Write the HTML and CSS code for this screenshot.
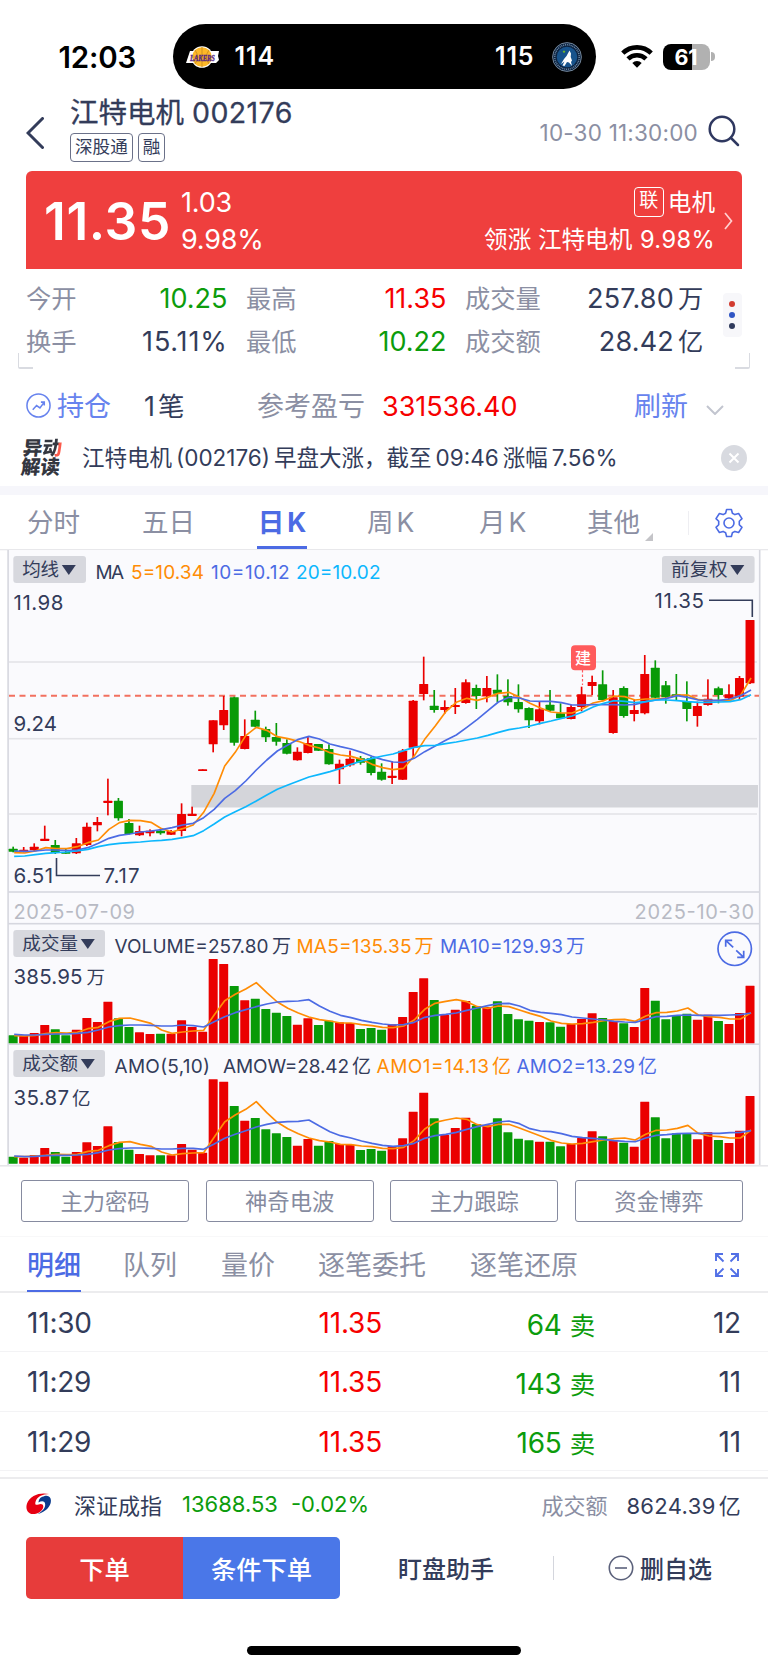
FILE: index.html
```html
<!DOCTYPE html>
<html lang="zh-CN">
<head>
<meta charset="utf-8">
<title>江特电机 002176</title>
<link rel="stylesheet" href="styles.css">
</head>
<body>
<div class="screen">
  <div class="status">
    <span class="clock">12:03</span>
    <div class="island">
      <svg class="lakers" viewBox="0 0 34 22"><circle cx="16" cy="11" r="10.8" fill="#fff"/><path d="M6 5h27l-1 5 1 4-3 3H0L4 5z" fill="#fff"/><circle cx="16" cy="11" r="9.800" fill="#fdb827"/><path d="M16 1v20M6 11h20M9 4q5 7 0 14M23 4q-5 7 0 14" fill="none" stroke="#b97e1c" stroke-width=".7"/><text x="4" y="14.800" textLength="25" lengthAdjust="spacingAndGlyphs" class="lakers-word">LAKERS</text></svg>
      <b>114</b><i class="grow"></i><b>115</b>
      <svg class="wolves" viewBox="0 0 30 30"><circle cx="15" cy="15" r="14.4" fill="#0c2340" stroke="#8fa2b5" stroke-width=".8"/><circle cx="15" cy="15" r="12.2" fill="none" stroke="#6f89a5" stroke-width="1.500" stroke-dasharray="1 .9"/><circle cx="15" cy="15" r="10.3" fill="#17538c"/><path d="M17.500 8.500l1.500 3-.3 3.500 1.300 3.500-1 1.500 1 4-3-3.500-2-.5-2.500 4-2-.5 2-4-3.500 2.500 3-5 2.500-3z" fill="#fff"/><path d="M12 8l.5 1 1 .2-.8.7.2 1-.9-.5-.9.5.2-1-.8-.7 1-.2z" fill="#78be20"/></svg>
    </div>
    <svg class="wifi" viewBox="0 0 32 24"><g fill="none" stroke="#000" stroke-width="4.600"><path d="M1.800 9.200a20.300 20.300 0 0 1 28.400 0"/><path d="M7 14.800a13 13 0 0 1 18 0"/></g><path d="M11.300 18.900a6.800 6.800 0 0 1 9.400 0L16 23.800z"/></svg>
    <div class="battery"><span>61</span></div><i class="nub"></i>
  </div>

  <header class="head">
    <svg class="back" viewBox="0 0 18 32"><path d="M16.500 1.500L2 16l14.500 14.500"/></svg>
    <div class="stock">
      <h1>江特电机<span>002176</span></h1>
      <div class="tags"><span>深股通</span><span>融</span></div>
    </div>
    <time>10-30 11:30:00</time>
    <svg class="search" viewBox="0 0 32 32"><circle cx="14" cy="14" r="12.300"/><path d="M23 23l7 7"/></svg>
  </header>

  <section class="quote">
    <strong>11.35</strong>
    <div class="delta"><span>1.03</span><span>9.98%</span></div>
    <div class="sector"><p><em>联</em>电机</p><p>领涨 江特电机 <span>9.98%</span></p></div>
    <svg class="more" viewBox="0 0 9 18"><path d="M1 1l6.500 8L1 17"/></svg>
  </section>

  <section class="stats">
    <div class="stat-grid">
      <label>今开</label><b class="down">10.25</b><label>最高</label><b class="up">11.35</b><label>成交量</label><b class="sum">257.80<u>万</u></b>
      <label>换手</label><b class="pct">15.11%</b><label>最低</label><b class="down">10.22</b><label>成交额</label><b class="sum">28.42<u>亿</u></b>
    </div>
    <div class="dots"><i></i><i></i><i></i></div>
    <i class="corner left"></i><i class="corner right"></i>
  </section>

  <section class="holding">
    <svg class="trend" viewBox="0 0 26 26"><circle cx="13" cy="13" r="12"/><path d="M7 17.500l4-4.500 3.500 2.500L19 9.500M15.500 9.500H19V13"/></svg>
    <span class="blue hold">持仓</span><span class="count">1<u>笔</u></span>
    <span class="muted ref">参考盈亏</span><span class="up profit">331536.40</span>
    <span class="blue refresh">刷新</span>
    <svg class="chev" viewBox="0 0 18 10"><path d="M1 1l8 8 8-8"/></svg>
  </section>

  <section class="notice">
    <div class="badge"><span>异<em>动</em></span><span>解读</span></div>
    <p>江特电机<u>(002176)</u><u>早盘大涨，</u>截至<u>09:46</u><u>涨幅</u><u>7.56%</u></p>
    <svg class="close" viewBox="0 0 26 26"><circle cx="13" cy="13" r="13"/><path d="M8.500 8.500l9 9M17.500 8.500l-9 9"/></svg>
  </section>

  <nav class="periods">
    <a>分时</a><a>五日</a><a class="on">日<u>K</u></a><a>周<u>K</u></a><a>月<u>K</u></a><a class="other">其他</a>
    <i class="rule"></i>
    <svg class="gear" viewBox="0 0 30 30"><circle cx="15" cy="15" r="5"/><path d="M12.600 1.500h4.800l1 3.700 2.500 1.400 3.700-1.100 3.400 5.100-2.700 2.700v3.400l2.700 2.700-3.400 5.100-3.700-1.100-2.500 1.400-1 3.700h-4.800l-1-3.700-2.500-1.400-3.700 1.100L2 19.400l2.700-2.700v-3.400L2 10.600l3.400-5.100 3.700 1.100 2.500-1.400z"/></svg>
  </nav>

  <svg class="chart" id="chart" viewBox="0 549 768 618"></svg>

  <div class="tools"><button>主力密码</button><button>神奇电波</button><button>主力跟踪</button><button>资金博弈</button></div>

  <nav class="ticks-nav">
    <a class="on">明细</a><a>队列</a><a>量价</a><a>逐笔委托</a><a>逐笔还原</a>
    <svg class="expand" viewBox="0 0 24 24"><path d="M1 8V1h7M1 1l7.500 7.500M16 1h7v7M23 1l-7.500 7.500M1 16v7h7M1 23l7.500-7.500M16 23h7v-7M23 23l-7.500-7.500"/></svg>
  </nav>
  <div class="ticks">
    <div class="tick"><span>11:30</span><span class="up">11.35</span><span class="down">64<u>卖</u></span><span>12</span></div>
    <div class="tick"><span>11:29</span><span class="up">11.35</span><span class="down">143<u>卖</u></span><span>11</span></div>
    <div class="tick"><span>11:29</span><span class="up">11.35</span><span class="down">165<u>卖</u></span><span>11</span></div>
  </div>

  <div class="index">
    <svg class="szse" viewBox="0 0 26 23"><path d="M24 1C15-1 4 2 1 11c-2 6 1 11 6 11 6 0 11-4 11-8 0-3-3-3-5-2-3 1-4 0-3-3C11 4 17 1 24 1z" fill="#e60012"/><path d="M17 4c6-3 9 0 9 4 0 6-6 12-14 14 5-3 8-6 8-10 0-4-4-4-7-2 0-2 1-5 4-6z" fill="#0a3a8c"/></svg>
    <span class="name">深证成指</span><span class="down val">13688.53</span><span class="down chg">-0.02%</span>
    <span class="muted turnover">成交额</span><span class="amt">8624.39<u>亿</u></span>
  </div>

  <div class="actions">
    <button class="order">下单</button><button class="cond">条件下单</button>
    <span class="assist">盯盘助手</span><i></i>
    <span class="remove"><svg viewBox="0 0 26 26"><circle cx="13" cy="13" r="11.700"/><path d="M7 13h12"/></svg>删自选</span>
  </div>
  <div class="home"></div>
</div>
<script src="chart.js"></script>
</body>
</html>
```
FILE: styles.css
```css
* { box-sizing: border-box; margin: 0; padding: 0; }
body { background: #fff; color: #333c5a; font-family: Inter, "Noto Sans CJK SC", sans-serif; }
.screen { width: 768px; height: 1669px; overflow: hidden; background: #fff; display: flex; flex-direction: column; }
.screen > * { flex: none; }
svg { display: block; fill: none; flex: none; }
u, i, em { text-decoration: none; font-style: normal; }
button { font-family: inherit; background: none; border: 0; }
.up { color: #f60000; }
.down { color: #0c9c0c; }
.blue { color: #6783ee; }
.muted { color: #8b8fa3; }

.status { height: 97px; padding-top: 24px; display: flex; align-items: flex-start; }
.clock { width: 114px; margin-left: 58.500px; font-size: 29.500px; font-weight: 600; line-height: 66px; color: #000; letter-spacing: -.2px; }
.island { width: 423px; height: 65px; border-radius: 33px; background: #000; color: #fff; display: flex; align-items: center; padding: 0 14px 0 13px; }
.island b { font-size: 25px; font-weight: 600; line-height: 65px; letter-spacing: .9px; }
.island .grow { flex: 1; }
.lakers { width: 34px; height: 22px; margin-right: 15px; }
.lakers-word { font: italic bold 9px "Liberation Serif", serif; fill: #552583; stroke: #552583; stroke-width: .3px; }
.wolves { width: 30px; height: 30px; margin-left: 17px; }
.wifi { width: 32px; height: 24px; margin: 20px 10px 0 25px; fill: #000; }
.battery { width: 47px; height: 26px; margin-top: 19.500px; border-radius: 8px; background: linear-gradient(90deg, #000 61%, #b1b1b1 61%); color: #fff; text-align: center; font-weight: 700; font-size: 21.500px; line-height: 26px; }
.nub { width: 4px; height: 9px; margin: 28px 0 0 1px; border-radius: 0 5px 5px 0; background: #b1b1b1; }

.head { height: 74px; padding: 0 28px 0 26px; display: flex; align-items: flex-start; }
.back { width: 18px; height: 32px; margin-top: 20px; stroke: #333c5a; stroke-width: 3; stroke-linecap: round; }
.stock { margin-left: 26px; flex: 1; }
.stock h1 { font-size: 28.500px; line-height: 32px; font-weight: 400; -webkit-text-stroke: .3px; white-space: nowrap; }
.stock h1 span { margin-left: 8px; font-size: 28.500px; letter-spacing: .4px; }
.tags { display: flex; gap: 5px; margin-top: 4px; }
.tags span { height: 29px; padding: 0 4px; border: 1.500px solid #6b7189; border-radius: 4px; font-size: 17.600px; line-height: 26px; }
.head time { margin-top: 22px; color: #8b8fa3; font-size: 22.500px; line-height: 28px; white-space: nowrap; letter-spacing: .2px; }
.search { width: 32px; height: 32px; margin: 18px 0 0 10px; stroke: #2f3860; stroke-width: 2.500; stroke-linecap: round; }

.quote { width: 716px; height: 98px; margin-left: 26px; border-radius: 6px 6px 0 0; background: #ef3f3e; color: #fff; display: flex; align-items: center; padding: 1px 9px 0 18px; }
.quote strong { width: 137px; font-size: 51.500px; font-weight: 600; letter-spacing: .6px; }
.delta { flex: 1; font-size: 27px; line-height: 37px; display: flex; flex-direction: column; letter-spacing: -.2px; }
.sector { text-align: right; font-size: 23.600px; }
.sector p { height: 37px; line-height: 37px; white-space: nowrap; }
.sector p:first-child { display: flex; align-items: center; justify-content: flex-end; }
.sector em { width: 30px; height: 30px; border: 1.500px solid #fff; border-radius: 4px; margin-right: 4px; font-size: 19px; line-height: 26px; text-align: center; }
.sector span { letter-spacing: .4px; margin-left: 1px; }
.more { width: 9px; height: 18px; margin-left: 9px; stroke: #ffd0d0; stroke-width: 1.700; }

.stats { height: 103px; padding: 9px 26px 0; display: flex; position: relative; }
.stat-grid { display: grid; grid-template-columns: 72px 129.500px 72px 147px 98px 159px; grid-template-rows: 42.500px 42.500px; align-items: center; width: 677.500px; }
.stat-grid label { color: #8b8fa3; font-size: 25.300px; line-height: 42px; white-space: nowrap; }
.stat-grid b { font-weight: 400; font-size: 27px; line-height: 42px; white-space: nowrap; justify-self: end; }
.stat-grid .pct { letter-spacing: .8px; }
.stat-grid .sum { letter-spacing: .2px; }
.stat-grid > :nth-child(6n+3), .stat-grid > :nth-child(6n+5) { margin-left: 18.500px; }
.stat-grid u { font-size: 25.300px; margin-left: 4px; }
.dots { width: 20px; height: 44px; margin: 15px 0 0 19px; border-radius: 4px; background: #f7f7fa; display: flex; flex-direction: column; align-items: center; justify-content: center; gap: 4.700px; }
.dots i { width: 6px; height: 6px; border-radius: 50%; background: #d23c30; }
.dots i:nth-child(2) { background: #2f55c4; }
.dots i:nth-child(3) { background: #2f3a5c; }
.corner { position: absolute; bottom: 3px; width: 15px; height: 16px; border-bottom: 2px solid #d9dbe1; }
.corner.left { left: 18px; border-left: 1.500px solid #d9dbe1; border-bottom-left-radius: 2px; }
.corner.right { right: 18px; border-right: 1.500px solid #d9dbe1; border-bottom-right-radius: 2px; }

.holding { height: 66px; padding-left: 26px; display: flex; align-items: center; font-size: 27px; line-height: 63px; white-space: nowrap; }
.holding span { padding-top: 3px; height: 66px; }
.trend { width: 25px; height: 25px; stroke: #6783ee; stroke-width: 1.600; }
.hold { width: 87px; margin-left: 6px; }
.count { width: 113px; }
.count u { margin-left: 3px; font-size: 26.500px; }
.ref { width: 125px; }
.profit { width: 252px; }
.refresh { width: 72px; }
.chev { width: 18px; height: 10px; margin-top: 9px; stroke: #c2c5cf; stroke-width: 2; }

.notice { height: 48px; padding: 0 21px 9px 22px; display: flex; align-items: center; }
.badge { width: 60px; height: 37px; display: flex; flex-direction: column; color: #33363f; font-size: 19.500px; line-height: 18.500px; font-weight: 900; transform: skewX(-6deg); }
.badge em { background: linear-gradient(105deg, #33363f 68%, #fb5b4c 68%); -webkit-background-clip: text; color: transparent; }
.notice p { flex: 1; font-size: 22.500px; padding-bottom: 3px; white-space: nowrap; }
.notice u { margin-left: 4px; }
.close { width: 26px; height: 26px; fill: #d8dae0; stroke: #fff; stroke-width: 2; }
.close circle { stroke: none; }

.periods { height: 63px; border-top: 9px solid #f6f6fb; padding-left: 27px; display: flex; align-items: flex-start; font-size: 26.500px; line-height: 54px; color: #8b8fa3; }
.periods a { width: 115px; height: 54px; white-space: nowrap; }
.periods a.on { width: 50px; margin-right: 60px; color: #4c6be4; font-weight: 700; border-bottom: 3px solid #4c6be4; text-align: center; }
.periods a:nth-child(4) { width: 112px; }
.periods a:nth-child(5) { width: 108px; }
.periods u { margin-left: 3px; }
.periods .other { width: 66px; position: relative; }
.other::after { content: ""; position: absolute; right: 0; top: 38px; border: solid transparent; border-width: 0 0 8px 8px; border-bottom-color: #c4c4c8; }
.rule { width: 1px; height: 24px; margin: 16px 25px 0 35px; background: #eeeef2; }
.gear { width: 30px; height: 30px; margin-top: 13px; stroke: #4c6be4; stroke-width: 1.600; stroke-linejoin: round; }

.chart { width: 768px; height: 618px; }
.chart text { fill: #333c5a; font-size: 19px; }
.chart .big { font-size: 20.500px; }
.chart .date { font-size: 20px; fill: #b8bac4; }
.chart .btn { font-size: 18.500px; }
.chart .orange { fill: #ff8c05; }
.chart .indigo { fill: #4c6be4; }
.chart .sky { fill: #0db7fd; }
.chart .white { fill: #fff; font-size: 16px; font-weight: 500; }
.chart .line { fill: none; stroke-width: 5; stroke-linejoin: round; }

.tools { height: 69px; padding: 13px 25px 0 21px; display: flex; justify-content: space-between; }
.tools button { width: 168px; height: 42px; border: 1.500px solid #868ba0; border-radius: 3px; color: #868ba0; font-size: 22.300px; line-height: 39px; }

.ticks-nav { height: 57px; border-top: 1px solid #f8f8f9; border-bottom: 2px solid #ececee; padding: 0 27px; display: flex; font-size: 27px; line-height: 57px; color: #8b8fa3; }
.ticks-nav a { height: 55px; margin-right: 44px; white-space: nowrap; }
.ticks-nav a:nth-child(3n) { margin-right: 43px; }
.ticks-nav a.on { margin-right: 42px; color: #4c6be4; font-weight: 500; border-bottom: 2.500px solid #4c6be4; }
.expand { width: 24px; height: 24px; margin: 16px 2px 0 auto; stroke: #5270e6; stroke-width: 1.900; }
.tick { height: 59.300px; border-bottom: 1.500px solid #f3f3f5; padding: 2px 27px 0; display: grid; grid-template-columns: 230px 125px 213px 146px; align-items: center; font-size: 28px; }
.tick span:nth-child(n+2) { justify-self: end; }
.tick u { font-size: 25.500px; margin-left: 8px; }
.ticks { height: 186px; border-bottom: 2px solid #ececee; letter-spacing: -.2px; }

.index { height: 58px; padding: 0 27px 9px 26px; display: flex; align-items: center; font-size: 22px; white-space: nowrap; }
.szse { width: 25px; height: 22px; }
.index .name { width: 108px; margin-left: 23px; }
.index .val { width: 109px; }
.index .turnover { margin-left: auto; margin-right: 19px; }
.index .amt { letter-spacing: .35px; }
.index u { margin-left: 3px; }

.actions { height: 61.500px; padding-left: 26px; display: flex; align-items: center; font-size: 24px; font-weight: 500; white-space: nowrap; }
.actions button { width: 157px; height: 61.500px; color: #fff; font-size: 25.300px; font-weight: 500; }
.actions .order { background: #e73c3b; border-radius: 5px 0 0 5px; }
.actions .cond { background: #4a77e8; border-radius: 0 5px 5px 0; }
.assist { margin-left: 58px; width: 155px; }
.actions i { width: 1px; height: 24px; background: #d4d6dd; }
.remove { display: flex; align-items: center; gap: 6px; margin-left: 54px; }
.remove svg { width: 26px; height: 26px; stroke: #5b617b; stroke-width: 1.600; }
.home { width: 274px; height: 9px; margin: 47px auto 0; border-radius: 5px; background: #000; }
```
FILE: chart.js
```javascript
// Candles: colour, high, body top, body bottom, low (thirds of a pixel below y=540)
const K = `g920,926,935,937 r921,929,934,937 r910,920,931,935 r857,896,903,903 g900,915,939,942 g925,936,941,941 r894,910,940,942 r848,860,915,918 r831,846,856,874 r716,782,789,826
g774,782,835,842 g837,849,882,884 r857,873,886,888 r868,872,880,889 g868,872,880,884 r870,873,884,885 r790,822,873,889 r800,821,828,828 r688,688,693,693 r541,541,613,637
r468,510,556,570 g470,472,608,617 r538,588,627,628 g512,539,560,562 g560,567,592,606 g549,591,605,617 g598,609,641,643 r622,635,661,662 r590,609,639,640 g612,612,632,633
g613,627,673,674 r659,671,688,732 r632,656,676,680 g648,655,668,674 g650,655,699,706 g670,695,719,722 r665,707,714,732 r627,632,719,720 r480,482,623,655 r350,432,462,481
g450,497,510,518 r481,501,510,521 r444,495,501,522 r418,427,489,491 g434,444,468,507 r408,444,468,487 g403,449,461,487 g418,468,487,497 g433,486,508,518 g502,504,541,564
r486,508,544,553 g450,494,512,513 g490,520,535,537 r495,501,537,538 r440,463,501,514 r407,426,438,465 g391,433,480,484 r450,472,579,581 g439,444,528,533 r480,510,522,544
r345,402,520,523 g361,383,473,475 g423,436,472,491 g402,463,468,480 g424,485,507,544 r485,498,528,560 r418,476,495,497 g440,445,465,490 r433,463,475,477 r408,414,470,480 r240,240,430,432`
  .split(/\s+/).map(s => [s[0], ...s.slice(1).split(',').map(Number)]);
const MA = {
  '#ff8c05': [938,939,933,923,926,926,920,908,900,868,848,841,842,847,866,876,866,855,817,760,678,637,587,562,571,590,596,604,616,624,638,645,649,658,673,683,689,685,648,598,558,515,487,475,481,472,460,457,472,490,504,516,519,519,506,489,482,468,470,480,477,477,474,465,465,479,482,482,482,466,414],
  '#4c6be4': [933,934,933,930,930,932,930,923,910,895,886,882,876,873,869,863,855,850,833,808,775,752,723,690,660,633,615,598,589,597,612,620,627,637,649,659,666,667,655,635,618,601,585,562,538,512,486,472,474,483,484,484,488,495,495,494,494,494,495,493,485,480,475,467,472,480,481,481,477,467,450],
  '#0db7fd': [949,948,944,940,938,936,933,928,920,914,910,908,906,903,901,898,893,887,872,852,831,815,800,783,765,748,735,723,711,703,695,685,673,663,655,648,642,632,622,617,616,611,606,600,594,586,577,569,564,558,550,543,535,528,516,501,490,482,484,488,485,480,480,482,485,487,487,486,485,479,464]
};
// Bars and averages of the two lower panes (thirds of a pixel below y=890)
const VOL = [436,438,429,405,418,436,419,384,396,335,385,411,427,432,431,431,391,411,425,207,222,288,331,326,357,368,378,404,385,405,392,397,399,417,414,419,403,381,306,265,330,375,359,333,348,351,334,372,388,392,396,397,410,402,387,370,384,393,400,411,294,332,388,376,371,389,374,393,402,369,287];
const AMO = [800,803,795,774,786,800,786,757,768,709,756,779,792,796,796,796,762,779,788,568,575,648,692,684,718,730,741,767,747,767,753,762,764,780,777,782,769,745,665,608,685,735,714,683,702,706,685,727,746,751,755,755,769,762,744,724,739,752,758,770,635,682,745,730,730,748,727,750,759,722,618];
const VMA = {
  '#ff8c05': [437,438,436,431,428,429,427,416,412,395,385,384,392,400,420,430,426,423,421,375,332,313,297,278,308,336,355,369,381,389,393,399,399,404,407,412,413,408,390,358,340,334,329,335,350,355,348,350,360,370,379,393,400,402,401,397,392,389,388,394,378,368,367,363,354,375,380,382,387,387,368],
  '#4c6be4': [433,435,435,433,432,432,430,427,420,411,407,405,405,406,408,408,405,407,411,395,380,368,359,350,342,336,334,333,329,348,364,376,383,391,397,402,405,404,397,382,376,373,369,361,354,347,341,340,348,361,367,370,374,381,384,387,390,394,396,397,388,380,379,376,375,376,376,376,375,374,369]
};
const AMA = {
  '#ff8c05': [800,800,798,796,793,794,793,784,781,767,757,755,763,769,786,795,791,789,788,742,696,675,658,635,668,697,716,731,744,752,756,763,764,768,770,775,776,772,752,717,697,690,684,688,704,710,703,703,714,726,738,751,759,762,760,755,750,746,744,750,733,721,720,715,706,730,738,740,744,744,720],
  '#4c6be4': [798,800,799,797,796,796,795,793,788,780,776,774,774,775,777,777,775,775,778,762,745,733,722,711,703,697,695,694,690,708,725,737,744,753,760,766,769,767,760,745,737,733,727,718,710,703,696,693,701,716,723,725,731,739,743,745,748,752,754,755,744,736,734,731,730,730,730,730,728,727,722]
};
const RED = '#ea0000', GREEN = '#089a08', GRID = '#e4e4e8', EDGE = '#d6d7df';
const cx = i => 39.5 + i * 31.58;
const rect = (x, y, w, h, f, r = 0) => `<rect x="${x}" y="${y}" width="${w}" height="${h}" fill="${f}" rx="${r}"/>`;
const curves = set => Object.entries(set).map(([c, a]) =>
  `<path class="line" stroke="${c}" d="M${a.map((v, i) => `${cx(i) + 3} ${v}`).join('L')}"/>`).join('');
const bars = (a, base) => a.map((v, i) => rect(cx(i) - 13.5, v, 27, base - v, K[i][0] === 'r' ? RED : GREEN, 1)).join('');
const text = (x, x2, y, s, cls = '') => `<text x="${x}" y="${y}" textLength="${x2 - x}" class="${cls}">${s}</text>`;
const button = (x, x2, y, s, tx2) => rect(x, y, x2 - x, 27, '#d7d8de', 3) + text(x + 9, tx2, y + 20, s, 'btn') +
  `<path fill="#333c5a" d="M${tx2 + 2.8} ${y + 9}h14l-7 10z"/>`;

let s = rect(0, 549, 768, 1.3, '#e8e8eb') + rect(8, 550, 752, 615, '#fafafd');
[662, 738.7, 814].forEach(y => s += rect(9, y - .8, 748, 1.6, GRID));
[892, 923.7, 1044.2].forEach(y => s += rect(8, y - .8, 752, 1.6, EDGE));
s += rect(7.3, 550, 1.6, 615, EDGE) + rect(758.9, 550, 1.6, 615, EDGE) + rect(0, 1165, 768, 1.6, '#e6e6e9');
s += rect(191.3, 785, 566.7, 22.5, '#d4d5da');
s += `<path d="M9 695.800H759" stroke="#f2705f" stroke-width="1.900" stroke-dasharray="6 4.500"/>`;
s += '<g transform="translate(0 540) scale(.33333)">' + K.map(([c, h, a, b, l], i) => {
  const f = c === 'r' ? RED : GREEN;
  return rect(cx(i) - 2.5, h, 5, l - h, f) + rect(cx(i) - 13.5, a, 27, b - a, f, 1.5);
}).join('') + curves(MA) + '</g>';
s += '<g transform="translate(0 890) scale(.33333)">' + bars(VOL, 460) + curves(VMA) + bars(AMO, 821) + curves(AMA) + '</g>';
s += '<path d="M56.500 858v17.500H100M709 600.300h43.300V617" fill="none" stroke="#333c5a" stroke-width="1.600"/>';
s += '<path d="M582.500 670v15" stroke="#ff5a5f" stroke-width="1.200" stroke-dasharray="2.500 2"/>' + rect(571, 645.3, 25, 25, '#ff5b5c', 4) + text(575, 591.5, 664, '建', 'white');
s += button(13.3, 86, 556, '均线', 59) + button(662, 754.6, 556, '前复权', 727.5) + button(13.3, 105, 930, '成交量', 78) + button(13.3, 105, 1050, '成交额', 78);
s += text(95.5, 124, 579, 'MA') + text(131, 204, 579, '5=10.34', 'orange') + text(211, 289.5, 579, '10=10.12', 'indigo') + text(296, 380.5, 579, '20=10.02', 'sky');
s += text(13.5, 63.5, 610, '11.98', 'big') + text(13.5, 57, 731, '9.24', 'big') + text(13.5, 53, 882.5, '6.51', 'big') + text(103.5, 139.5, 882.5, '7.17', 'big') + text(654.5, 704, 608, '11.35', 'big');
s += text(13.5, 135, 918.7, '2025-07-09', 'date') + text(634.5, 754, 918.7, '2025-10-30', 'date');
s += text(114.5, 268.5, 952.5, 'VOLUME=257.80') + text(272, 289.5, 952.5, '万') + text(296.5, 411.5, 952.5, 'MA5=135.35', 'orange') + text(414.5, 432, 952.5, '万', 'orange') + text(440, 563, 952.5, 'MA10=129.93', 'indigo') + text(566, 583.5, 952.5, '万', 'indigo');
s += text(13.5, 82.5, 983.7, '385.95', 'big') + text(86.500, 105, 983.7, '万', 'date dark') + text(13.5, 69, 1104.5, '35.87', 'big') + text(72, 92, 1104.5, '亿', 'date dark');
s = s.replaceAll('class="date dark"', 'class="btn"');
s += text(114.5, 210, 1073, 'AMO(5,10)') + text(223, 349, 1073, 'AMOW=28.42') + text(352, 370, 1073, '亿') + text(376.5, 489, 1073, 'AMO1=14.13', 'orange') + text(492, 510, 1073, '亿', 'orange') + text(516.5, 635, 1073, 'AMO2=13.29', 'indigo') + text(638, 656, 1073, '亿', 'indigo');
s += '<g transform="translate(734.7 948.800)" fill="none" stroke="#4c6be4" stroke-width="1.700"><circle r="16.700"/><path d="M-1.500-1.500L-9-8.500M-9-2v-6.500h6.500M1.500 1.500L9 8.500M9 2v6.500H2.500"/></g>';
document.getElementById('chart').innerHTML = s;
```
